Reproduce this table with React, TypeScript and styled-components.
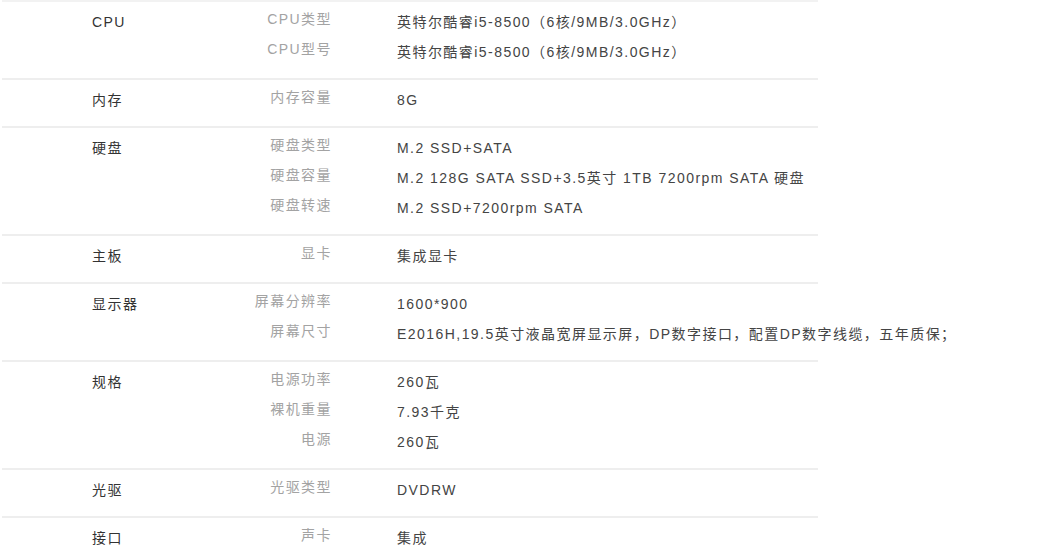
import styled, { createGlobalStyle } from "styled-components";

const GlobalStyle = createGlobalStyle`
  html, body {
    margin: 0;
    padding: 0;
    background: #fff;
    overflow: hidden;
  }
  body {
    font-family: "Liberation Sans", "Noto Sans CJK SC", sans-serif;
    font-size: 14px;
    letter-spacing: 1.45px;
  }
`;

type Item = { key: string; value: string };
type Group = { name: string; items: Item[] };

// spec data
const specs: Group[] = [
  {
    name: "CPU",
    items: [
      { key: "CPU类型", value: "英特尔酷睿i5-8500（6核/9MB/3.0GHz）" },
      { key: "CPU型号", value: "英特尔酷睿i5-8500（6核/9MB/3.0GHz）" },
    ],
  },
  { name: "内存", items: [{ key: "内存容量", value: "8G" }] },
  {
    name: "硬盘",
    items: [
      { key: "硬盘类型", value: "M.2 SSD+SATA" },
      { key: "硬盘容量", value: "M.2 128G SATA SSD+3.5英寸 1TB 7200rpm SATA 硬盘" },
      { key: "硬盘转速", value: "M.2 SSD+7200rpm SATA" },
    ],
  },
  { name: "主板", items: [{ key: "显卡", value: "集成显卡" }] },
  {
    name: "显示器",
    items: [
      { key: "屏幕分辨率", value: "1600*900" },
      {
        key: "屏幕尺寸",
        value: "E2016H,19.5英寸液晶宽屏显示屏，DP数字接口，配置DP数字线缆，五年质保；",
      },
    ],
  },
  {
    name: "规格",
    items: [
      { key: "电源功率", value: "260瓦" },
      { key: "裸机重量", value: "7.93千克" },
      { key: "电源", value: "260瓦" },
    ],
  },
  { name: "光驱", items: [{ key: "光驱类型", value: "DVDRW" }] },
  {
    name: "接口",
    items: [
      { key: "声卡", value: "集成" },
      { key: "网卡", value: "集成千兆网卡" },
    ],
  },
];

const App = () => {
  return (
    <>
      <GlobalStyle />
      <Table>
        {specs.map((g) => (
          <GroupRow key={g.name}>
            <GroupName>{g.name}</GroupName>
            <Items>
              {g.items.map((it) => (
                <ItemRow key={it.key}>
                  <Key>{it.key}</Key>
                  <Value>{it.value}</Value>
                </ItemRow>
              ))}
            </Items>
          </GroupRow>
        ))}
      </Table>
    </>
  );
};

const Table = styled.div`
  width: 816px;
  margin-left: 2px;
`;

const GroupRow = styled.div`
  display: flex;
  border-top: 2px solid #eeeeee;
  padding: 5px 0 11px;
  &:first-child {
    border-top-color: #f2f2f2;
  }
`;

const GroupName = styled.div`
  flex-shrink: 0;
  width: 160px;
  padding-left: 90px;
  line-height: 30px;
  color: #333;
`;

const Items = styled.div`
  display: flex;
  flex-direction: column;
  min-width: 0;
`;

const ItemRow = styled.div`
  display: flex;
  line-height: 30px;
  white-space: nowrap;
`;

const Key = styled.div`
  flex-shrink: 0;
  width: 80px;
  text-align: right;
  color: #a3a3a3;
  margin-top: -3px;
`;

const Value = styled.div`
  flex-shrink: 0;
  margin-left: 65px;
  color: #444;
`;

export default App;
